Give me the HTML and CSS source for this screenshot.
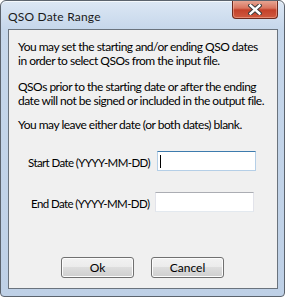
FILE: index.html
```html
<!DOCTYPE html>
<html lang="en">
  <head>
    <meta charset="UTF-8" />
    <title>QSO Date Range</title>
    <link rel="stylesheet" href="styles.css">
  </head>
  <body>
    <div class="window">
      <div class="titlebar">
        <span class="title">QSO Date Range</span>
        <button class="close" type="button" aria-label="Close">
          <svg width="14" height="11" viewBox="0 0 14 11">
            <path d="M2.5 1.5 L11.5 9.5 M11.5 1.5 L2.5 9.5" stroke="#3c3c3c" stroke-width="4.4" stroke-linecap="square" fill="none" />
            <path d="M2.5 1.5 L11.5 9.5 M11.5 1.5 L2.5 9.5" stroke="#ffffff" stroke-width="2.4" stroke-linecap="square" fill="none" />
          </svg>
        </button>
      </div>

      <div class="client">
        <p class="intro">You may set the starting and/or ending QSO dates<br>in order to select QSOs from the input file.</p>
        <p class="note">QSOs prior to the starting date or after the ending<br>date will not be signed or included in the output file.</p>
        <p class="hint">You may leave either date (or both dates) blank.</p>

        <div class="row row-start">
          <label class="label">Start Date (YYYY-MM-DD)</label>
          <div class="field focused"><span class="caret"></span></div>
        </div>
        <div class="row row-end">
          <label class="label">End Date (YYYY-MM-DD)</label>
          <div class="field"></div>
        </div>

        <div class="buttons">
          <button class="btn" type="button">Ok</button>
          <button class="btn" type="button">Cancel</button>
        </div>
      </div>
    </div>
  </body>
</html>
```

FILE: styles.css
```css
* {
  box-sizing: border-box;
}
body {
  margin: 0;
  background: #ffffff;
  font-family: "Lato", "Liberation Sans", sans-serif;
  font-size: 12px;
  color: #000000;
}
.window {
  width: 285px;
  height: 297px;
  overflow: hidden;
  border: 1px solid #5b636d;
  border-radius: 6px 6px 4px 4px;
  background: linear-gradient(#dce7f4, #c6d7eb 28px, #bed0e6);
  box-shadow: inset 0 1px 0 #f4f8fc;
  display: flex;
  flex-direction: column;
}

/* Title bar */
.titlebar {
  height: 28px;
  flex: none;
  display: flex;
  align-items: flex-start;
}
.title {
  padding: 8px 0 0 7px;
  font-size: 12px;
  line-height: 15px;
  letter-spacing: 0.2px;
  color: #1a1a1a;
}
.close {
  margin: -1px 6px 0 auto;
  width: 46px;
  height: 19px;
  padding: 0;
  border: 1px solid #6d2a1e;
  border-top: none;
  border-radius: 0 0 4px 4px;
  background: linear-gradient(#e9ab99, #d9755f 45%, #c4412a 55%, #cf5a40);
  box-shadow: inset 0 0 0 1px rgba(255, 200, 180, 0.45);
  display: flex;
  align-items: center;
  justify-content: center;
}

/* Client area */
.client {
  flex: 1;
  min-height: 0;
  overflow: hidden;
  margin: 0 6px 7px 7px;
  border: 1px solid #6a737d;
  background: #f0f0f0;
  padding: 10px 9px 0;
  white-space: nowrap;
  letter-spacing: -0.5px;
}
.client p {
  margin: 0;
  line-height: 14px;
}
.note {
  margin-top: 12px !important;
}
.hint {
  margin-top: 10px !important;
}

.row {
  display: flex;
  align-items: center;
}
.row-start {
  margin-top: 19px;
  padding-left: 10px;
}
.row-end {
  margin-top: 21px;
  padding-left: 13px;
}
.label {
  font-size: 11.5px;
  letter-spacing: -0.6px;
  padding-top: 2px;
}
.row-start .label {
  width: 129px;
}
.row-end .label {
  width: 124px;
}
.field {
  width: 99px;
  height: 20px;
  background: #ffffff;
  border: 1px solid #e2e3ea;
  border-top-color: #abadb3;
  border-bottom-color: #e3e9ef;
  padding: 3px 0 0 2px;
}
.field.focused {
  border-color: #b5cfe7;
  border-top-color: #3d7bad;
}
.caret {
  display: block;
  width: 1px;
  height: 13px;
  background: #000000;
}

/* Buttons */
.buttons {
  margin-top: 45px;
  padding-left: 43px;
  display: flex;
  gap: 17px;
}
.btn {
  width: 73px;
  height: 21px;
  padding: 0;
  border: 1px solid #707070;
  border-radius: 3px;
  background: linear-gradient(#f2f2f2, #ebebeb 50%, #dddddd 50%, #cfcfcf);
  box-shadow: inset 0 0 0 1px #fcfcfc;
  font-family: inherit;
  font-size: 12px;
  letter-spacing: 0;
  color: #000000;
}
```
